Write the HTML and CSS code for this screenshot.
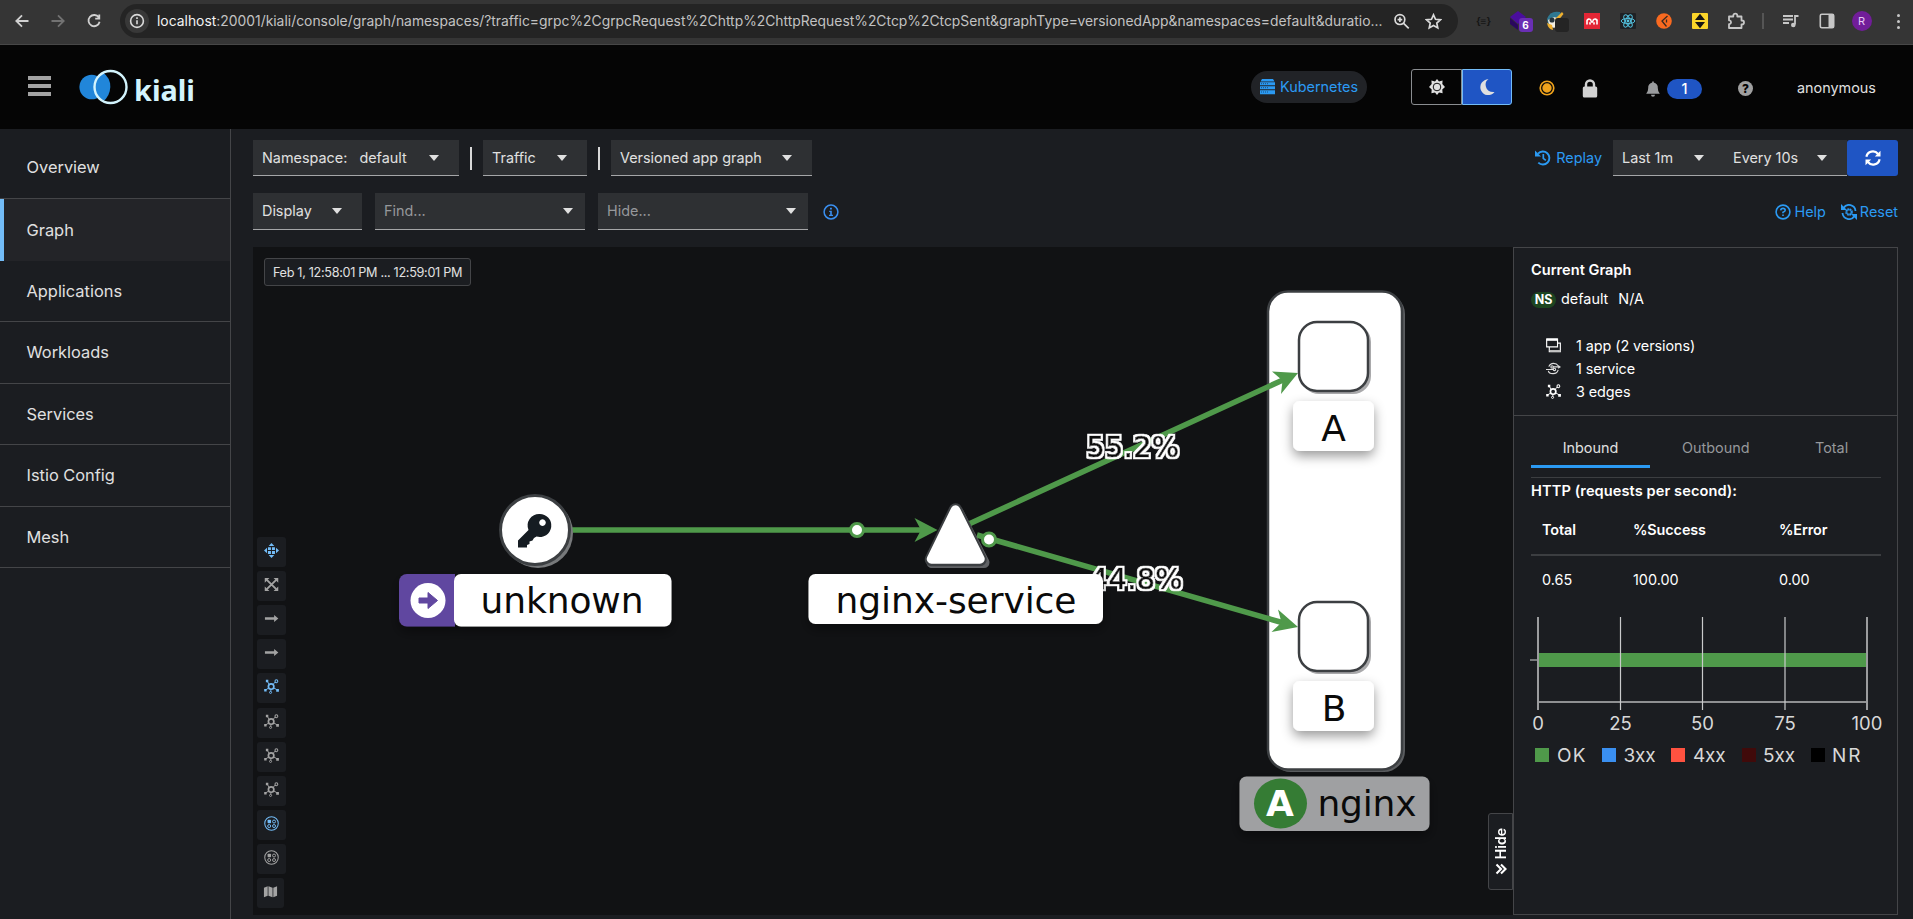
FILE: index.html
```html
<!DOCTYPE html>
<html lang="en">
<head>
<meta charset="utf-8">
<title>Kiali</title>
<link rel="stylesheet" href="styles.css">
</head>
<body>
<svg class="defs" width="0" height="0">
  <defs>
    <symbol id="topology" viewBox="0 0 16 16">
      <g fill="none" stroke="currentColor" stroke-width="1.3"><circle cx="7.6" cy="8" r="2.9" stroke-width="1.8"/><path d="M9.6 5.8l2.6-2.8M5.6 6L3.5 2.4M5 9.6l-3 1.9M10.3 9.5l3.4 1.9M7.3 11v2.5" stroke-width="1"/><circle cx="13.2" cy="2.4" r="1.5" stroke-width="1.1"/><circle cx="7" cy="14.3" r="1.1" stroke-width="1"/></g>
      <path fill="currentColor" d="M2 .8h2.6v2.6H2zM.2 10.6h2.6v2.6H.2zM13 10.6h2.9v2.9H13z"/>
    </symbol>
    <symbol id="boxes" viewBox="0 0 16 16">
      <g fill="none" stroke="currentColor"><circle cx="8" cy="8" r="7.2" stroke-width="1.1"/><circle cx="10.7" cy="5.9" r="1.6"/><circle cx="5.5" cy="10.7" r="1.6"/><circle cx="10.7" cy="10.7" r="1.6"/></g>
      <rect x="3.8" y="4" width="3.7" height="3.7" rx=".8" fill="currentColor"/>
    </symbol>
    <symbol id="arrow" viewBox="0 0 16 16"><path fill="currentColor" d="M1 6.7h9.8V4.2L15.300 8l-4.500 3.800V9.300H1z"/></symbol>
  </defs>
</svg>

<div class="browser">
  <svg class="nav-ico first" viewBox="0 0 16 16"><path d="M14.500 8H2.500M8 2.300L2.300 8 8 13.700"/></svg>
  <svg class="nav-ico dim" viewBox="0 0 16 16"><path d="M1.500 8h12M8 2.300L13.700 8 8 13.700"/></svg>
  <svg class="nav-ico" viewBox="0 0 16 16"><path d="M12.800 4.500A5.600 5.600 0 1 0 13.600 8.800M13.300 1.500V5.700H9.200"/></svg>
  <div class="urlbar">
    <span class="site"><svg width="16" height="16" viewBox="0 0 16 16"><circle cx="8" cy="8" r="6.400"/><path d="M8 7.300v4M8 4.300v1.700"/></svg></span>
    <span class="url"><b>localhost</b>:20001/kiali/console/graph/namespaces/?traffic=grpc%2CgrpcRequest%2Chttp%2ChttpRequest%2Ctcp%2CtcpSent&amp;graphType=versionedApp&amp;namespaces=default&amp;duratio...</span>
    <svg class="u-ico" viewBox="0 0 16 16"><circle cx="6.500" cy="6.200" r="4.600"/><path d="M10 9.700l4.800 4.800M4.300 6.200h4.400M6.500 4v4.400"/></svg>
    <svg class="u-ico star" viewBox="0 0 16 16"><path d="M8 1.700l1.900 4.200 4.600.5-3.400 3.100.9 4.500L8 11.700 4 14l.9-4.500L1.500 6.400l4.600-.5z"/></svg>
  </div>
  <div class="exts">
    <span class="ext json">{≡}</span>
    <span class="ext"><svg width="20" height="22" viewBox="0 0 20 22"><path fill="#4a0d9e" d="M8 1l8 6-8 7-8-7z"/><path fill="#2a075e" d="M0 8l8 7v5l-8-6z"/></svg><i class="badge">6</i></span>
    <span class="ext"><svg width="20" height="20" viewBox="0 0 20 20"><path fill="#2f7891" d="M1 8Q4-1 14 1l2 4-8 5-6 3z"/><path fill="#f1ede2" d="M2 9q6-5 11-1l-2 8q-8 3-9-7z"/><circle cx="6" cy="9" r="2.600" fill="#25333b"/><path fill="#efb02e" d="M1 12l5 2 1 5q-5-1-6-7zM9 8l7-7 1.500 2-6.500 8z"/></svg><i class="badge dark"></i></span>
    <span class="ext"><svg width="16" height="16" viewBox="0 0 16 16"><rect width="16" height="16" fill="#e32635"/><path d="M3 11V8.500a2 2 0 0 1 4-.8Q8 10.500 9 7.700a2 2 0 0 1 4 .8V11M6 11V9.800M10 11V9.800" fill="none" stroke="#fff" stroke-width="1.600" stroke-linecap="round"/></svg></span>
    <span class="ext"><svg width="16" height="16" viewBox="0 0 16 16"><rect width="16" height="16" rx="1" fill="#1f2124"/><g fill="none" stroke="#53c1de"><ellipse cx="8" cy="8" rx="6.800" ry="2.600"/><ellipse cx="8" cy="8" rx="6.800" ry="2.600" transform="rotate(60 8 8)"/><ellipse cx="8" cy="8" rx="6.800" ry="2.600" transform="rotate(120 8 8)"/></g><circle cx="8" cy="8" r="1.400" fill="#53c1de"/></svg></span>
    <span class="ext"><svg width="16" height="16" viewBox="0 0 16 16"><circle cx="8" cy="8" r="7.800" fill="#f96a20"/><path d="M11.500 3L6 8l4.500 5.500M10.500 6.500v3" fill="none" stroke="#3a2a20" stroke-width="1.300"/></svg></span>
    <span class="ext"><svg width="16" height="16" viewBox="0 0 16 16"><rect width="16" height="16" rx="1" fill="#fbd52a"/><path d="M8 .8L13 7H3zM3 9h10l-5 6.200z" fill="#151515"/></svg></span>
    <span class="ext"><svg width="18" height="18" viewBox="0 0 18 18"><path d="M2 4.500h4.300V3.600a2 2 0 0 1 4 0v.9h4.200v4h.6a1.900 1.900 0 0 1 0 3.800h-.6V16H2v-3.800h.5a2 2 0 0 0 0-3.900H2z" fill="none" stroke="#c7c7c7" stroke-width="1.800" stroke-linejoin="round"/></svg></span>
    <span class="vsep"></span>
    <span class="ext"><svg width="18" height="18" viewBox="0 0 18 18"><path d="M1 4h10M1 7.500h10M1 11h6M16.500 4H13v8.500" fill="none" stroke="#c7c7c7" stroke-width="1.800"/><circle cx="11.300" cy="13" r="2.300" fill="#c7c7c7"/></svg></span>
    <span class="ext"><svg width="16" height="16" viewBox="0 0 16 16"><rect x="1.300" y="1.300" width="13.400" height="13.400" rx="1.500" fill="none" stroke="#c7c7c7" stroke-width="1.600"/><path d="M9.500 1h5v14h-5z" fill="#c7c7c7"/></svg></span>
    <span class="avatar">R</span>
    <span class="kebab"><i></i><i></i><i></i></span>
  </div>
</div>

<header class="masthead">
  <div class="burger"><i></i><i></i><i></i></div>
  <svg class="logo" width="118" height="44" viewBox="78 65 118 44">
    <circle cx="91.700" cy="87" r="12.300" fill="#2186da"/>
    <path d="M103 72.500A17 17 0 0 0 103 101.500Q110 96 110.300 87T103 72.500z" fill="#2186da"/>
    <circle cx="110.500" cy="87" r="16" fill="none" stroke="#d3f4fd" stroke-width="2.400"/>
    <text x="134" y="101" textLength="61" lengthAdjust="spacingAndGlyphs" class="brand">kiali</text>
  </svg>
  <div class="cluster"><svg width="15" height="16" viewBox="0 0 15 16"><path fill="#2b9af3" d="M2 0h11l1.500 2.500H.5zM0 3.200h15v3H0zM0 7.200h15v3H0zM0 11.200h15v4H0z"/><path d="M1 4.700h7M1 8.700h7M1 13h7" stroke="#1a4f80" stroke-dasharray="1 1"/></svg>Kubernetes</div>
  <div class="theme">
    <span><svg width="16" height="16" viewBox="0 0 16 16"><path d="M8 0l2 2.400 3.600-.8-.3 3.400L16 8l-2.700 2.500.3 3.800-3.600-.8L8 16l-2-2.500-3.600.8.300-3.800L0 8l2.700-3-.3-3.400 3.600.8z" fill="#e0e0e0"/><circle cx="8" cy="8" r="3.800" fill="none" stroke="#111" stroke-width="1"/></svg></span>
    <span class="on"><svg width="15" height="16" viewBox="0 0 15 16"><path d="M8.500.3A7.900 7.900 0 1 0 14.500 13Q7.500 13.500 6 8T8.500.3z" fill="#e0e0e0"/></svg></span>
  </div>
  <svg class="dot-ico" width="16" height="16" viewBox="0 0 16 16"><circle cx="8" cy="8" r="7.600" fill="#f0a31c"/><circle cx="8" cy="8" r="5.300" fill="none" stroke="#0a0a0a" stroke-width="1.300"/></svg>
  <svg class="lock" width="16" height="19" viewBox="0 0 16 19"><rect x=".8" y="7.500" width="14.400" height="11" rx="1.500" fill="#d2d2d2"/><path d="M4 8.500V5.500a4 4 0 0 1 8 0v3" fill="none" stroke="#d2d2d2" stroke-width="2.400"/></svg>
  <svg class="bell" width="14" height="16" viewBox="0 0 14 16"><path d="M7 0v1.500A4.800 4.800 0 0 1 11.800 7q0 4 2 5.800H.2q2-1.800 2-5.800A4.800 4.800 0 0 1 7 1.500zM5 13.800h4a2 2 0 0 1-4 0z" fill="#9a9c9e"/><path d="M6.200.5h1.600v2H6.200z" fill="#9a9c9e"/></svg>
  <span class="count">1</span>
  <span class="q">?</span>
  <span class="user">anonymous</span>
</header>

<div class="app">
  <nav class="side">
    <a>Overview</a><a class="cur">Graph</a><a>Applications</a><a>Workloads</a><a>Services</a><a>Istio Config</a><a>Mesh</a>
  </nav>
  <main class="content">
    <div class="row r1">
      <div class="sel ns">Namespace:&nbsp;&nbsp;<span class="val">default</span><i class="caret"></i></div>
      <span class="bar"></span>
      <div class="sel tr">Traffic<i class="caret"></i></div>
      <span class="bar"></span>
      <div class="sel ver">Versioned app graph<i class="caret"></i></div>
      <a class="link replay"><svg width="16" height="16" viewBox="0 0 16 16"><path d="M3 3.700A6.500 6.500 0 1 1 3.300 12.600" fill="none" stroke="currentColor" stroke-width="1.900"/><path d="M0 0.500v6h6z" fill="currentColor"/><path d="M8.300 4v4.300l2.500 2" fill="none" stroke="currentColor" stroke-width="1.700"/></svg>Replay</a>
      <div class="sel last">Last 1m<i class="caret"></i></div>
      <div class="sel every">Every 10s<i class="caret"></i></div>
      <button class="refresh"><svg width="16" height="16" viewBox="0 0 16 16" fill="none" stroke="#fff" stroke-width="2.200"><path d="M1.400 6.700A6.500 6.500 0 0 1 13 4M14.600 9.300A6.500 6.500 0 0 1 3 12"/><path d="M15.500.8v5.700H9.800zM.5 15.200V9.500h5.700z" fill="#fff" stroke="none"/></svg></button>
    </div>
    <div class="row r2">
      <div class="sel disp">Display<i class="caret"></i></div>
      <div class="sel find ph">Find...<i class="caret"></i></div>
      <div class="sel find ph">Hide...<i class="caret"></i></div>
      <svg class="info" width="16" height="16" viewBox="0 0 16 16"><circle cx="8" cy="8" r="6.900" fill="none" stroke="#3a8ff0" stroke-width="1.500"/><path d="M6.200 6.800h2.600v4H10v1.200H6V10.800h1.200V8h-1zM7 3.700h1.900v1.900H7z" fill="#3a8ff0"/></svg>
      <a class="link help"><svg width="16" height="16" viewBox="0 0 16 16"><circle cx="8" cy="8" r="6.900" fill="none" stroke="currentColor" stroke-width="1.600"/><path d="M5.700 6.300Q5.900 4.400 8 4.400T10.200 6.200Q10.200 7.300 8 8.300V9.300M8 10.400v1.700" fill="none" stroke="currentColor" stroke-width="1.600"/></svg>Help</a>
      <a class="link"><svg width="16" height="16" viewBox="0 0 16 16" fill="none" stroke="currentColor"><path d="M2.500 4A6.500 6.500 0 0 1 14.500 7M13.500 12A6.500 6.500 0 0 1 1.500 9" stroke-width="1.800"/><path d="M0 0v6h6zM16 16v-6h-6z" fill="currentColor" stroke="none"/><circle cx="8" cy="8" r="3" stroke-width="1.600" stroke-dasharray="1.800 .6"/><circle cx="8" cy="8" r="2.200" stroke-width="1"/></svg>Reset</a>
    </div>
    <div class="work">
      <section class="canvas">
        <svg class="graph" viewBox="253 247 1260 668">
          <defs>
            <filter id="sh" x="-20%" y="-40%" width="140%" height="220%"><feDropShadow dx="0" dy="5" stdDeviation="6" flood-color="#000" flood-opacity=".4"/></filter>
            <filter id="halo" x="-10%" y="-10%" width="120%" height="120%"><feMorphology in="SourceAlpha" operator="dilate" radius="1.500" result="d"/><feFlood flood-color="#fff"/><feComposite in2="d" operator="in" result="w"/><feMerge><feMergeNode in="w"/><feMergeNode in="SourceGraphic"/></feMerge></filter>
          </defs>
          <rect x="1270" y="293" width="135" height="479" rx="21" fill="#5a5c5f"/>
          <rect x="1268" y="291.500" width="134" height="478" rx="20" fill="#fff" stroke="#3c3f42" stroke-width="2.500"/>
          <g class="edges">
            <path d="M571 530H925M970 523.500L1284 379.500M977 535L1282 622.500"/>
            <path class="head" d="M937.500 530L914.500 518 921 530 914.500 542zM1298 373L1272 371.500 1282.500 380.500 1281 394zM1298 627L1278 609.500 1281.500 622.500 1271.500 632z"/>
            <circle cx="857" cy="530" r="6.500"/><circle cx="989" cy="539.500" r="6.500"/>
          </g>
          <g class="pct" filter="url(#halo)"><text x="1086.500" y="456.500" textLength="92.500">55.2%</text><text x="1090" y="589" textLength="92.500">44.8%</text></g>
          <circle cx="538" cy="533" r="35" fill="#77797b"/>
          <circle cx="535" cy="530" r="34.500" fill="#fff" stroke="#3c3f42" stroke-width="3"/>
          <g transform="translate(518 514)" fill="#151c22"><path fill-rule="evenodd" d="M21.500 0a11.500 11.500 0 1 1-3 22.500l-2.500 1.500-1.500 2.500-3 1v2.500l-2.500 1v2.500H0v-7L10.500 16A11.500 11.500 0 0 1 21.500 0zm3 5.300a3.300 3.300 0 1 0 .01 0z"/></g>
          <g stroke-linejoin="round" stroke-linecap="round"><path d="M958 512L932 562.500h52z" fill="#606265" stroke="#606265" stroke-width="11"/><path d="M955.500 510L931.500 559.500h48.500z" fill="#3c3f42" stroke="#3c3f42" stroke-width="13.500"/><path d="M955.500 510L931.500 559h48.500z" fill="#fff" stroke="#fff" stroke-width="9.500"/></g>
          <g filter="url(#sh)"><path d="M407 574h48v52.500h-48a8 8 0 0 1-8-8v-36.500a8 8 0 0 1 8-8z" fill="#6147a0"/><rect x="454" y="574" width="217.500" height="52.500" rx="7" fill="#fff"/></g>
          <circle cx="428" cy="600.500" r="17.500" fill="#fff"/><path d="M419 598h9v-5.500l9.500 8-9.500 8V603h-9z" fill="#6147a0" stroke="#6147a0" stroke-linejoin="round"/>
          <rect x="808.500" y="574" width="294.500" height="50" rx="7" fill="#fff" filter="url(#sh)"/>
          <g class="node"><rect class="nsh" x="1301" y="324" width="70" height="70" rx="18"/><rect x="1299" y="322" width="69" height="69" rx="18"/><rect class="nsh" x="1301" y="604" width="70" height="70" rx="18"/><rect x="1299" y="602" width="69" height="69" rx="18"/></g>
          <g fill="#fff" filter="url(#sh)"><rect x="1293" y="401" width="81" height="50" rx="7"/><rect x="1293" y="681" width="81" height="50" rx="7"/></g>
          <rect x="1239.500" y="776.500" width="190" height="54.500" rx="7" fill="#9fa0a2" filter="url(#sh)"/>
          <ellipse cx="1280.500" cy="803.500" rx="26.500" ry="25" fill="#357c34"/>
          <g class="lbl">
            <text x="480.500" y="613" textLength="163">unknown</text>
            <text x="835.500" y="613" textLength="241">nginx-service</text>
            <text x="1333.500" y="440.500" text-anchor="middle">A</text>
            <text x="1334" y="720.500" text-anchor="middle">B</text>
            <text class="w" x="1280" y="815.500" text-anchor="middle">A</text>
            <text x="1317.500" y="815.500" textLength="99">nginx</text>
          </g>
        </svg>
        <div class="stamp">Feb 1, 12:58:01 PM ... 12:59:01 PM</div>
        <div class="tools">
          <span class="on"><svg viewBox="0 0 16 16"><path fill="currentColor" d="M8 0l3 3.200H5zM8 16l3-3.200H5zM0 8l3.200-3v6zM16 8l-3.200-3v6zM4.200 4.500h3.200v3H4.200zM8.500 4.500h3.200v3H8.500zM4.200 8.600h3.200v3H4.200zM8.500 8.600h3.200v3H8.500z"/></svg></span>
          <span><svg viewBox="0 0 16 16"><path fill="currentColor" d="M.8 1h5L.8 6zM15.200 1h-5l5 5zM.8 15h5l-5-5zM15.200 15h-5l5-5z"/><path d="M3 3l10 10M13 3L3 13" stroke="currentColor" stroke-width="2"/></svg></span>
          <span><svg><use href="#arrow"/></svg></span>
          <span><svg><use href="#arrow"/></svg></span>
          <span class="on"><svg><use href="#topology"/></svg></span>
          <span><svg><use href="#topology"/></svg></span>
          <span><svg><use href="#topology"/></svg></span>
          <span><svg><use href="#topology"/></svg></span>
          <span class="on"><svg><use href="#boxes"/></svg></span>
          <span><svg><use href="#boxes"/></svg></span>
          <span class="map"><svg viewBox="0 0 16 16"><path fill="currentColor" d="M1 4l4-1.500v10L1 14zM5.800 2.500L10.200 4v10l-4.400-1.500zM11 4l4-1.500v10L11 14z"/></svg></span>
        </div>
        <div class="hide"><span>Hide</span><svg width="12" height="12" viewBox="0 0 12 12"><path d="M1.500 1.500L6 6 1.500 10.500M6 1.500L10.500 6 6 10.500" fill="none" stroke="#fff" stroke-width="2.100"/></svg></div>
      </section>
      <aside class="panel">
        <div class="sum">
          <h4>Current Graph</h4>
          <p class="nsrow"><span class="nsb">NS</span>default<span class="na">N/A</span></p>
          <ul>
            <li><svg viewBox="0 0 16 16"><path d="M.7 1h11.600v8.500H.7zM3.500 10v4.500h11.800V5.500h-3" fill="none" stroke="#fff" stroke-width="1.200"/><path d="M.5.5h12v2.500H.5z" fill="#fff"/><path d="M4 12.800h11.500v2H4z" fill="#bbb"/></svg>1 app (2 versions)</li>
            <li><svg viewBox="0 0 16 16" fill="none" stroke="#ddd" stroke-width="1.200"><path d="M3 6Q4.500 2.500 8 2.500T13 5M13 9.500Q12 13.500 7.500 13.500T2.500 10.500M0 9h8M7.500 6.300H14"/><path d="M13 4.300l3 2-3 2z" fill="#ddd" stroke="none"/><circle cx="9" cy="9" r="1.300"/><circle cx="6.500" cy="6.300" r="1.300"/></svg>1 service</li>
            <li><svg><use href="#topology"/></svg>3 edges</li>
          </ul>
        </div>
        <div class="detail">
          <div class="tabs"><span class="cur">Inbound</span><span class="t2">Outbound</span><span class="t3">Total</span></div>
          <h4>HTTP (requests per second):</h4>
          <div class="tbl th"><b>Total</b><b>%Success</b><b>%Error</b></div>
          <div class="tbl"><span>0.65</span><span>100.00</span><span>0.00</span></div>
          <svg class="chart" width="366" height="160" viewBox="1529 612 366 160">
            <rect x="1538" y="654" width="329" height="14" fill="#4f994a"/>
            <path d="M1537 703h331" stroke="#8f9092" stroke-width="2"/>
            <path d="M1530 661h8" stroke="#77797b" stroke-width="2"/>
            <path d="M1538 618v93M1867 618v93" stroke="#9b9c9e" stroke-width="2"/>
            <path d="M1620.500 618v93M1702.500 618v93M1785 618v93" stroke="#c9cacb" stroke-width="1.200"/>
            <g class="ct" text-anchor="middle"><text x="1538" y="730.500">0</text><text x="1620.500" y="730.500">25</text><text x="1702.500" y="730.500">50</text><text x="1785" y="730.500">75</text><text x="1867" y="730.500">100</text></g>
            <path d="M1535 749h14v14h-14z" fill="#4f994a"/><path d="M1602 749h14v14h-14z" fill="#3a8ff0"/><path d="M1671 749h14v14h-14z" fill="#ff5240"/><path d="M1742 749h14v14h-14z" fill="#400a0a"/><path d="M1811 749h14v14h-14z" fill="#000"/>
            <g class="ct leg"><text x="1557" y="763" textLength="28.500">OK</text><text x="1623.500" y="763" textLength="32">3xx</text><text x="1693" y="763" textLength="32.500">4xx</text><text x="1763" y="763" textLength="32">5xx</text><text x="1832" y="763" textLength="28.500">NR</text></g>
          </svg>
        </div>
      </aside>
    </div>
  </main>
</div>
</body>
</html>
```
FILE: styles.css
```css
* { box-sizing: border-box; }
html, body { margin: 0; height: 100%; overflow: hidden; }
body { background: #1b1d21; color: #e0e0e0; font: 14.4px/20px Inter, sans-serif; white-space: nowrap; display: flex; flex-direction: column; }
svg { display: block; flex: none; }
i { font-style: normal; }
.defs { position: absolute; }

/* browser toolbar */
.browser { flex: none; height: 45px; background: #353535; border-bottom: 1px solid #474747; padding: 4px 8px 0 14px; display: flex; align-items: flex-start; }
.nav-ico { width: 16px; height: 16px; margin: 9px 20px 0 0; fill: none; stroke: #d0d0d0; stroke-width: 1.800; }
.nav-ico.dim { stroke: #727272; }
.urlbar { width: 1338px; height: 34px; margin-left: -2px; border-radius: 17px; background: #242424; display: flex; align-items: center; padding-left: 5px; }
.site { width: 24px; height: 24px; border-radius: 12px; background: #383838; display: grid; place-items: center; }
.site svg, .u-ico { fill: none; stroke: #dadada; stroke-width: 1.600; }
.url { width: 1234px; margin-left: 8px; font-size: 13.890px; color: #c2c2c2; }
.url b { font-weight: 400; color: #f2f2f2; }
.u-ico { width: 17px; height: 17px; margin-left: 2px; }
.u-ico.star { margin-left: 15px; }
.exts { height: 34px; display: flex; align-items: center; margin-left: 15.500px; }
.ext { width: 20px; height: 24px; margin-right: 16px; position: relative; display: grid; place-items: center; flex: none; }
.json { font-size: 10px; font-weight: 700; color: #161616; }
.badge { position: absolute; left: 9px; top: 9px; width: 14px; height: 14px; border-radius: 3px; background: #6a2fb4; color: #fff; font: 700 10px/14px Inter, sans-serif; text-align: center; }
.badge.dark { background: #242424; }
.vsep { width: 2px; height: 16px; background: #555; margin: 0 17px 0 0; }
.avatar { width: 20px; height: 20px; margin-left: -1px; border-radius: 50%; background: #711d99; color: #e6c9f4; font-size: 11px; line-height: 20px; text-align: center; }
.kebab { display: grid; gap: 3px; margin-left: 25px; }
.kebab i { width: 3px; height: 3px; border-radius: 2px; background: #c7c7c7; }

/* masthead */
.masthead { flex: none; height: 84px; background: #050505; display: flex; align-items: center; padding: 0 37px 0 28px; }
.burger { display: grid; gap: 4px; margin: -2px 27px 0 0; }
.burger i { width: 23px; height: 4px; background: #a3a3a3; }
.brand { font: 700 29px "Noto Sans", sans-serif; fill: #d3f4fd; }
.cluster { margin: 0 44px 0 auto; width: 116px; height: 32px; border-radius: 16px; background: #212327; color: #2b9af3; display: flex; align-items: center; gap: 5px; padding-left: 9px; }
.theme { width: 101px; height: 36px; display: flex; margin-right: 26.500px; }
.theme span { width: 51px; border: 1px solid #8a8d90; border-radius: 3px 0 0 3px; display: grid; place-items: center; }
.theme .on { width: 50px; background: #1f55c4; border-color: #73bcf7; border-radius: 0 3px 3px 0; }
.dot-ico { margin: 1px 27.500px 0 0; }
.lock { margin: 3px 48px 0 0; }
.bell { margin: 3px 7px 0 0; }
.count { width: 35px; height: 20px; border-radius: 10px; background: #1f55c4; color: #fff; font-weight: 500; text-align: center; margin: 4px 36px 0 0; }
.q { width: 15px; height: 15px; border-radius: 8px; background: #a0a0a0; color: #050505; font: 800 12px/15px Inter, sans-serif; text-align: center; margin: 3px 44px 0 0; }
.user { width: 79px; margin-top: 2px; }

/* page */
.app { flex: 1; display: flex; min-height: 0; }
.side { width: 231px; border-right: 1px solid #444548; display: flex; flex-direction: column; padding-top: 8px; }
.side a { height: 61.500px; border-bottom: 1px solid #444548; padding: 0 0 0 26.500px; font-size: 16.400px; line-height: 61px; }
.side a.cur { background: #232428; height: 62px; border-bottom: 0; border-left: 4px solid #73bcf7; padding-left: 22.500px; line-height: 62px; }
.content { flex: 1; padding: 11px 15px 4px 22px; display: flex; flex-direction: column; min-width: 0; }
.row { display: flex; align-items: center; flex: none; }
.r1 { height: 36px; }
.r2 { height: 37px; margin: 17px 0; }
.sel { height: 100%; background: #2e3033; border-bottom: 1px solid #a5a6a8; padding: 0 20px 0 9px; display: flex; align-items: center; }
.sel.ph { color: #96989b; }
.val { margin-left: 4px; }
.caret { margin-left: auto; border: 5px solid transparent; border-top: 6px solid #e0e0e0; border-bottom: 0; }
.ns { width: 206px; }
.tr { width: 104px; }
.ver { width: 201px; }
.bar { width: 2px; height: 23px; background: #d8d8d8; margin: 0 11px; }
.link { color: #2b9af3; display: flex; align-items: center; gap: 5px; }
.replay { margin: 0 11px 0 auto; }
.last { width: 111px; }
.every { width: 123px; }
.refresh { width: 51px; height: 36px; padding: 0; border: 0; border-radius: 3px; background: #1f55c4; display: grid; place-items: center; }
.disp { width: 109px; margin-right: 13px; }
.find { width: 210px; margin-right: 13px; padding-right: 12px; }
.info { margin-left: 1.500px; }
.help { margin: 0 15px 0 auto; }
.help, .help + .link { gap: 3px; }

.work { flex: 1; display: flex; min-height: 0; }
.canvas { flex: 1; background: #111214; position: relative; display: flex; flex-direction: column; justify-content: space-between; align-items: flex-start; min-width: 0; }
.graph { position: absolute; left: 0; top: 0; width: 1260px; height: 668px; }
.edges path { fill: none; stroke: #4f994a; stroke-width: 5.600; }
.edges path.head { fill: #4f994a; stroke: none; }
.edges circle { fill: #fff; stroke: #4f994a; stroke-width: 3; }
.pct { font: 28.700px "DejaVu Sans", sans-serif; fill: #0a0a0a; stroke: #0a0a0a; stroke-width: .7; }
.lbl { font: 36px "DejaVu Sans", sans-serif; fill: #0a0a0a; }
.lbl .w { fill: #fff; font-weight: 700; }
.node rect { fill: #fff; stroke: #3c3f42; stroke-width: 2.500; }
.node .nsh { fill: #a9a9ab; stroke: none; }
.stamp { position: relative; margin: 11px 0 0 11px; width: 207px; height: 28px; border: 1px solid #444548; border-radius: 3px; background: #1b1d21; font-size: 12.700px; line-height: 27px; text-align: center; letter-spacing: -.33px; }
.tools { position: relative; margin: 0 0 7px 4px; display: grid; gap: 4.100px; color: #a3a3a3; }
.tools span { width: 29px; height: 30px; border-radius: 3px; background: #1b1d21; display: grid; place-items: center; padding-bottom: 3px; }
.tools svg { width: 15px; height: 15px; }
.tools .on { color: #73bcf7; }
.tools .map { width: 27px; }
.hide { position: absolute; right: 0; top: 566px; width: 25px; height: 77px; border: 1px solid #444548; border-radius: 3px 0 0 3px; background: #1b1d21; display: flex; flex-direction: column; align-items: center; justify-content: center; gap: 4px; }
.hide span { writing-mode: vertical-rl; transform: rotate(180deg); font-weight: 600; font-size: 14px; color: #fff; }

.panel { width: 385px; border: 1px solid #444548; color: #fff; }
h4 { margin: 0; font-size: 14.600px; font-weight: 600; }
.sum { height: 168px; border-bottom: 1px solid #444548; padding: 12px 17px 0; }
.nsrow { margin: 9px 0 25px; display: flex; align-items: center; }
.nsb { width: 25px; height: 16px; border-radius: 8px; background: #1d4520; font: 700 12.500px/16px Inter, sans-serif; text-align: center; margin: 1px 5px 0 0; }
.na { margin-left: 10px; }
ul { list-style: none; margin: 0; padding: 0 0 0 15px; }
li { height: 23px; line-height: 24px; display: flex; align-items: center; gap: 15px; letter-spacing: -.07px; }
li svg { width: 15px; height: 15px; }
.detail { padding: 20px 16px 0 17px; }
.tabs { display: flex; height: 42px; border-bottom: 1px solid #3c3e41; color: #96989b; }
.tabs .cur { width: 119px; height: 32px; border-bottom: 3px solid #2b9af3; color: #e0e0e0; text-align: center; }
.tabs span { line-height: 24px; }
.t2 { margin-left: 32px; width: 133px; }
.detail h4 { margin-top: 3px; letter-spacing: .08px; }
.tbl { display: grid; grid-template-columns: 91px 146px 1fr; padding: 14px 0 0 11px; }
.th { padding-top: 19px; height: 55px; border-bottom: 2px solid #3c3e41; }
.tbl b { font-weight: 600; letter-spacing: -.1px; }
.chart { margin: 21px 0 0 -2px; }
.ct { font: 18.500px Inter, sans-serif; fill: #d8d8d8; }
.leg { font-size: 19px; }
```
